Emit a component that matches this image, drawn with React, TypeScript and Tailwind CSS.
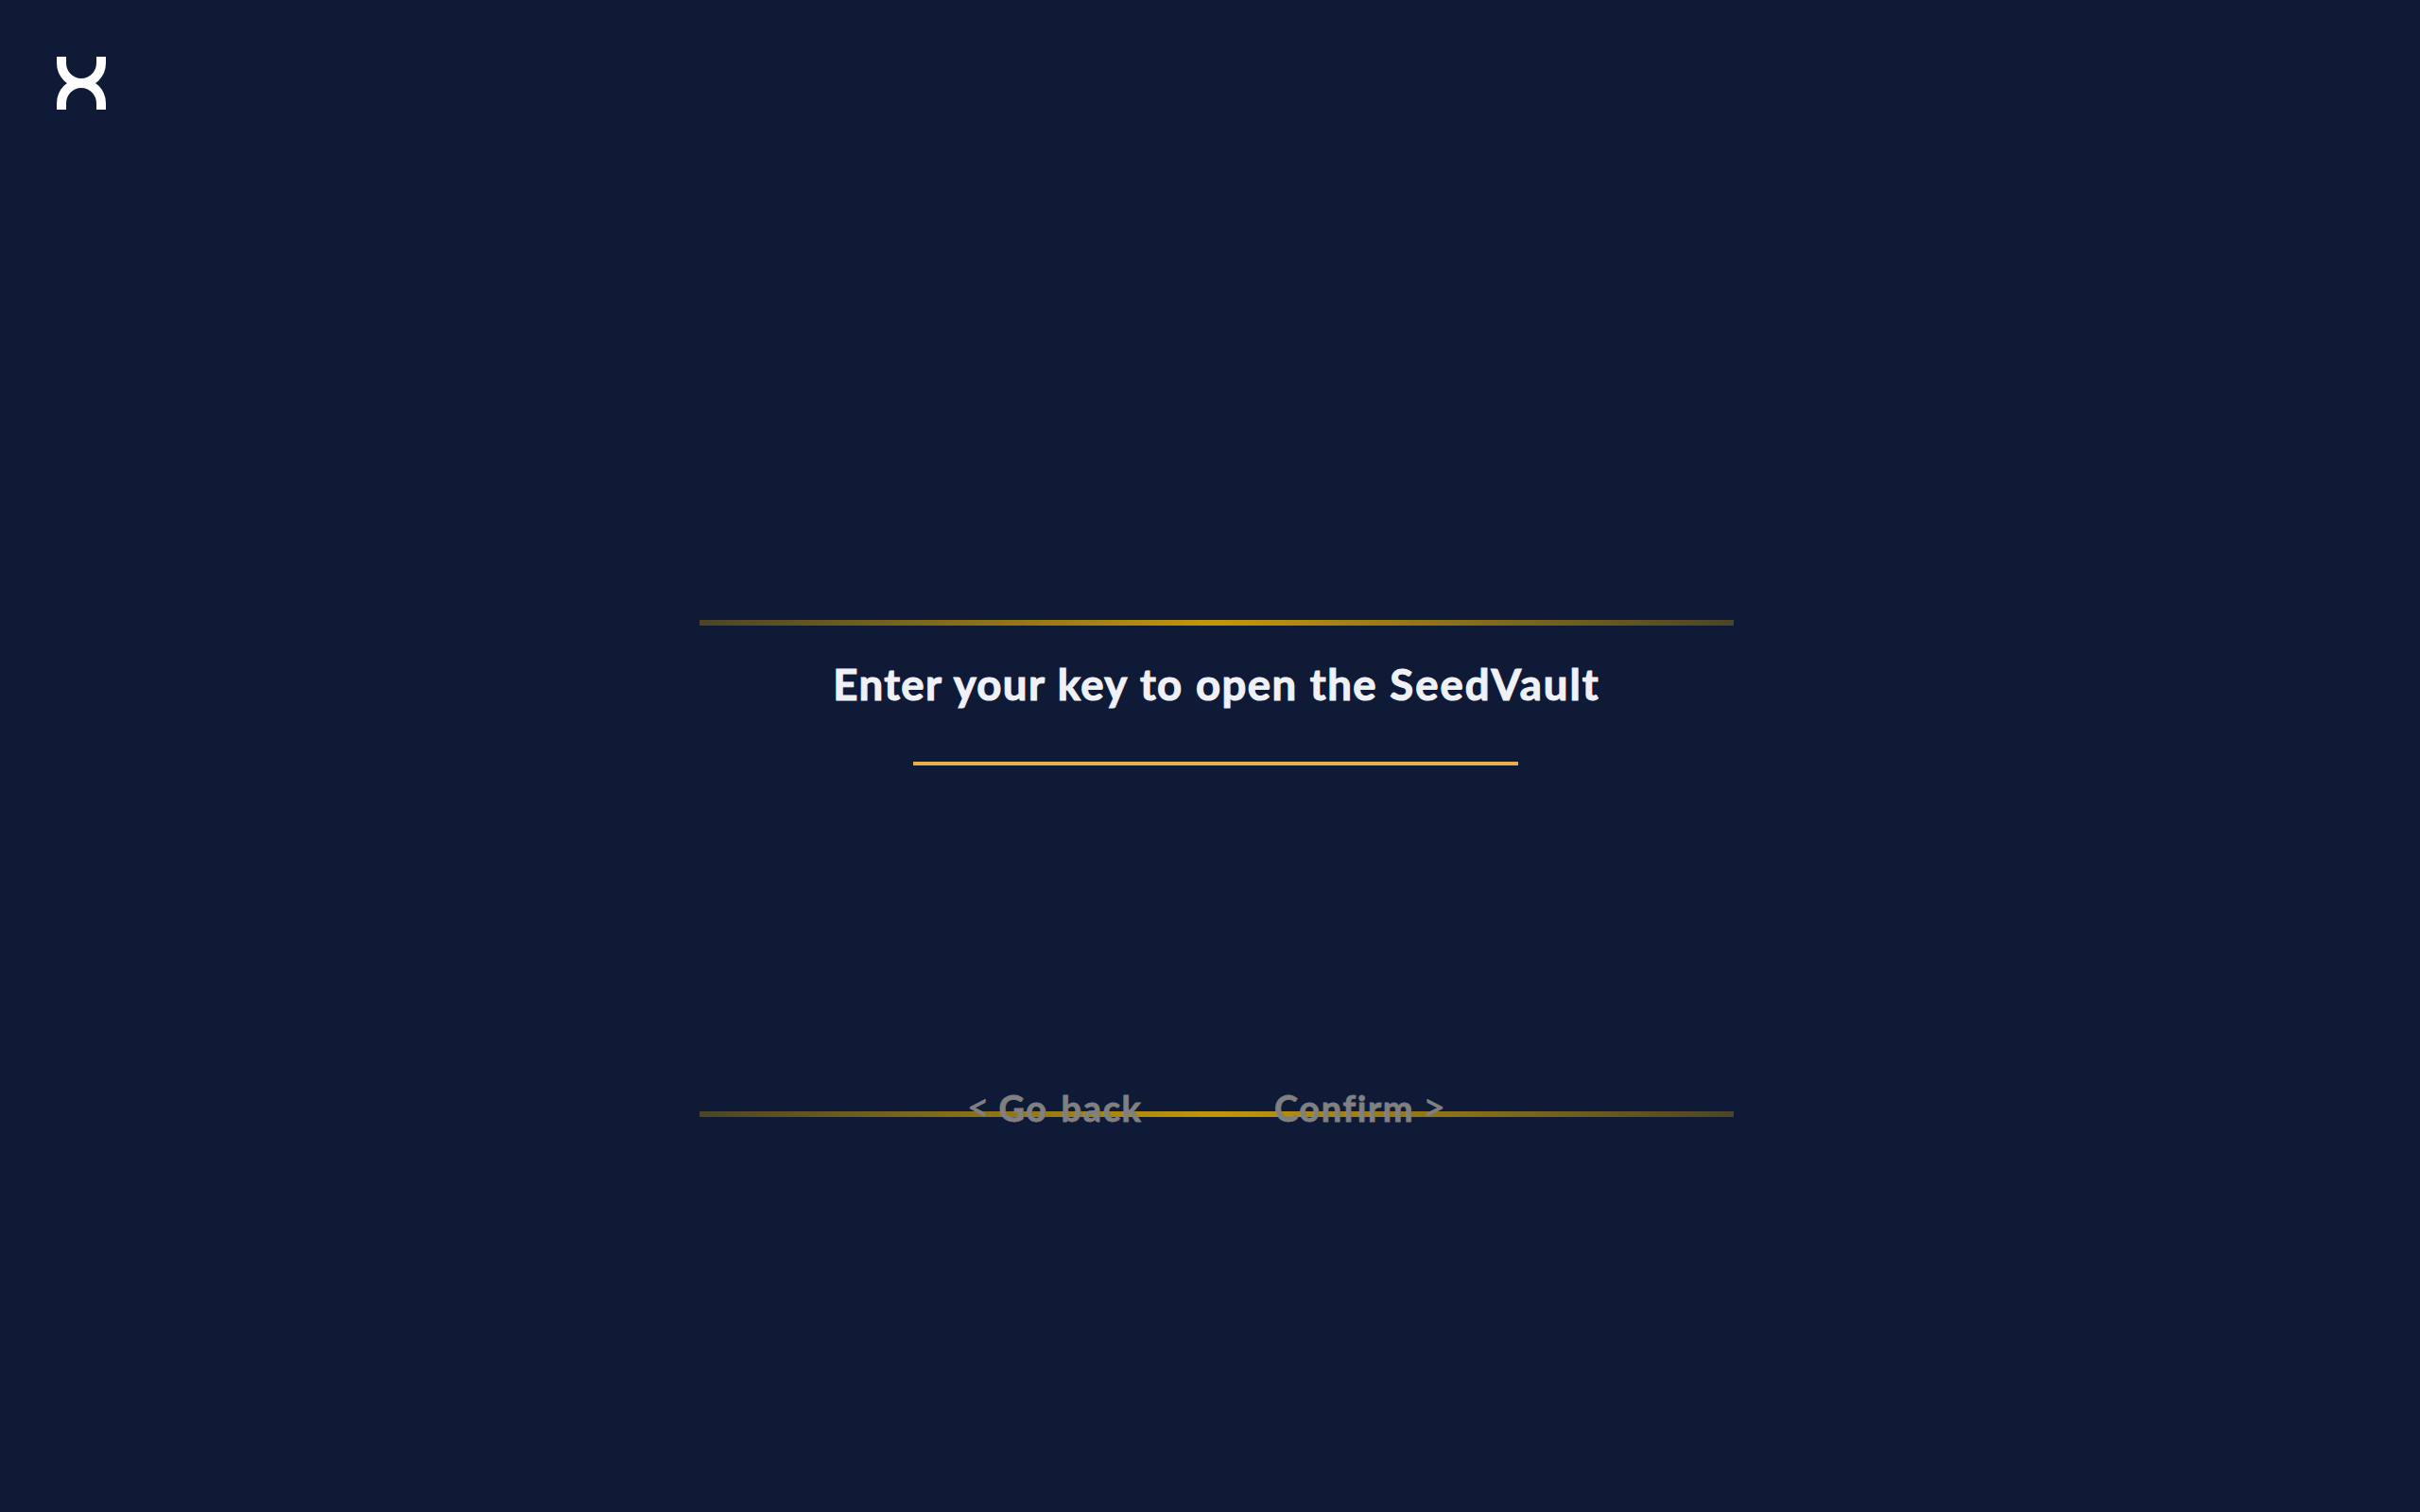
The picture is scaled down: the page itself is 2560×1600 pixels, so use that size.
function Logo() {
  return (
    <svg width="52" height="56" viewBox="0 0 52 56" fill="none" stroke="#fff" strokeWidth="10">
      <path d="M5 -2V6.5A21 21.5 0 0 0 47 6.5V-2" />
      <path d="M5 58V49.5A21 21.5 0 0 1 47 49.5V58" />
    </svg>
  );
}

function Rule() {
  return <div className="h-[6px] w-full bg-[linear-gradient(90deg,#4c4427,#c1970b_50%,#4c4427)]" />;
}

export default function App() {
  return (
    <div className="flex h-[1600px] w-full flex-col bg-[#0f1b36] font-['Lato',sans-serif] font-bold">
      <header className="h-[656px] p-[60px]">
        <Logo />
      </header>
      <main className="ml-[740px] w-[1094px]">
        <Rule />
        <div className="flex h-[514px] flex-col items-center">
          <h1 className="mt-8 whitespace-nowrap text-[45.5px] leading-[60px] tracking-[1.4px] [word-spacing:0.9px] text-[#f0f1f6] [-webkit-text-stroke:1.1px_#f0f1f6]">
            Enter your key to open the <span className="tracking-[2px]">SeedVault</span>
          </h1>
          <input className="mr-[2px] mt-3 h-[44px] w-[640px] border-b-4 border-[#e8b04a] bg-transparent text-center text-[32px] text-white outline-none" />
        </div>
        <div className="relative">
          <Rule />
          <div className="absolute -top-[27px] left-[283px] flex text-[38px] leading-[46px] tracking-[1.6px] text-[#808080] [-webkit-text-stroke:0.8px_#808080]">
            <button className="flex w-[325px] gap-[8px] whitespace-nowrap text-left">
              <span className="-translate-y-[1px] text-[41px] font-normal">&lt;</span>
              <span className="[word-spacing:3px]">Go back</span>
            </button>
            <button className="flex gap-[9px] whitespace-nowrap text-left">
              <span>Confirm</span>
              <span className="-translate-y-[1px] text-[41px] font-normal">&gt;</span>
            </button>
          </div>
        </div>
      </main>
    </div>
  );
}
